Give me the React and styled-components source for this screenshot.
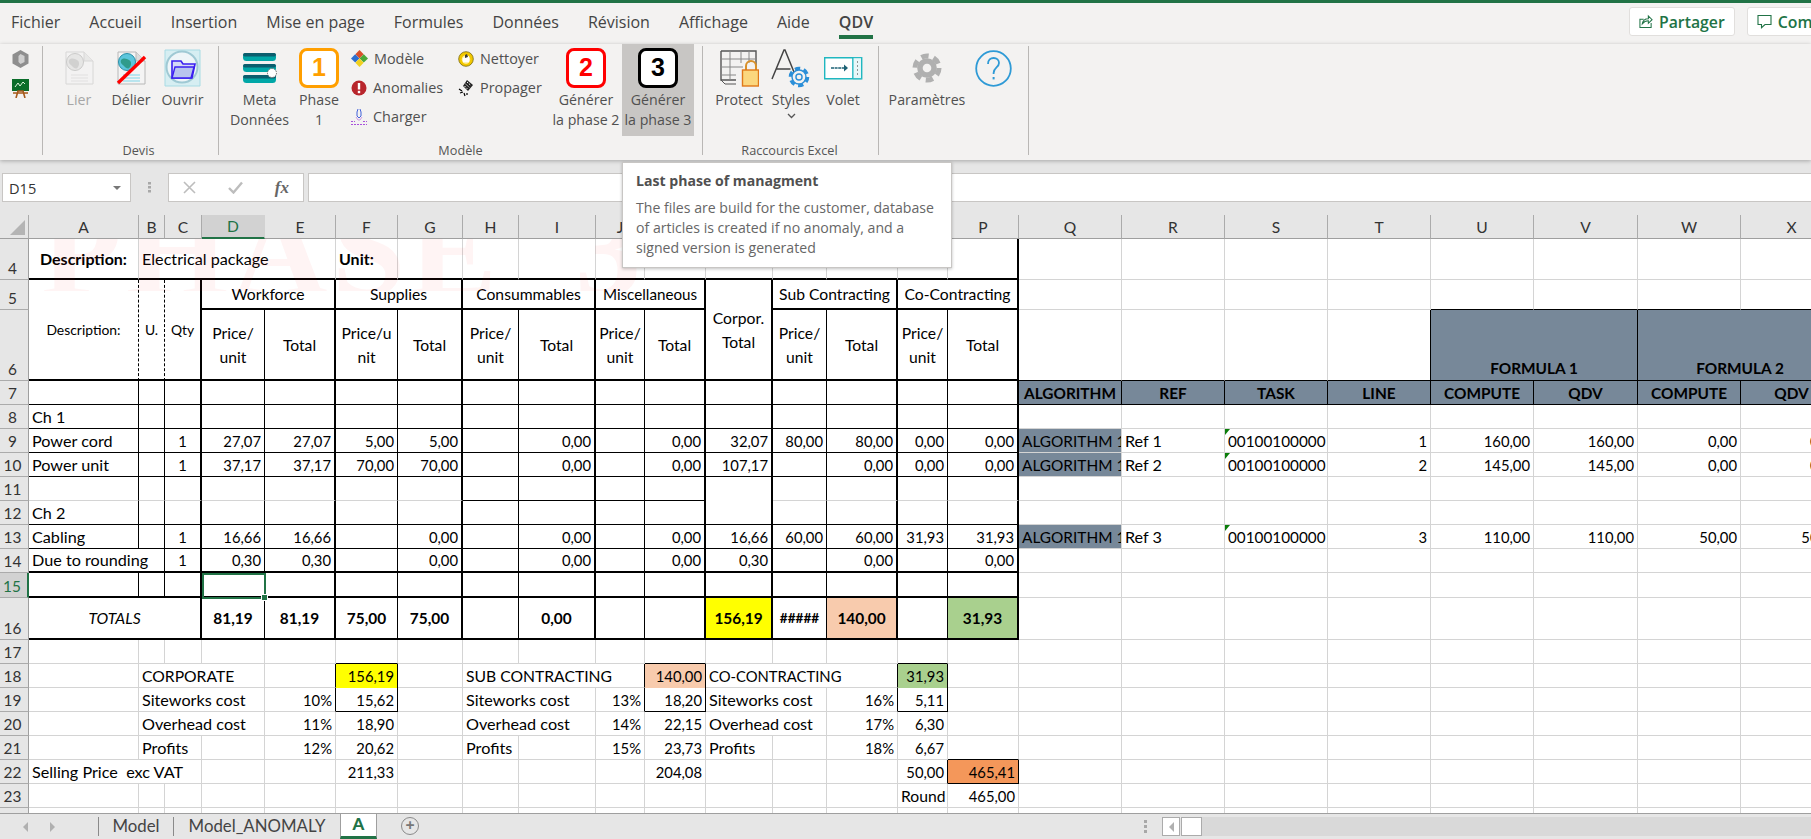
import React from 'react';
import styled, { createGlobalStyle, css } from 'styled-components';

const Global = createGlobalStyle`
  html, body { margin: 0; padding: 0; background: #fff; }
  #root { width: 1811px; height: 839px; overflow: hidden; }
`;

const UI_FONT = `"Open Sans", "Noto Sans", sans-serif`;
const CELL_FONT = `Lato, "Open Sans", sans-serif`;
const GREEN = '#217346';
const SLATE = '#778899';

const Page = styled.div`
  position: relative;
  width: 1811px;
  height: 839px;
  display: flex;
  flex-direction: column;
  overflow: hidden;
  font-family: ${UI_FONT};
  background: #e6e6e6;
`;

/* ---------- ribbon ---------- */

const TitleBar = styled.header`
  flex: none;
  height: 44px;
  box-sizing: border-box;
  border-top: 3px solid ${GREEN};
  background: #f3f2f1;
  display: flex;
  align-items: flex-start;
  justify-content: space-between;
  overflow: hidden;
`;

const Tabs = styled.nav`
  display: flex;
  gap: 29px;
  padding-left: 11px;
`;

const Tab = styled.div`
  height: 36px;
  box-sizing: border-box;
  padding-top: 7px;
  font-size: 16px;
  line-height: 24px;
  color: #444;
  ${p => p.$active && css`
    font-weight: 600;
    border-bottom: 4px solid ${GREEN};
  `}
`;

const Actions = styled.div`
  flex: none;
  width: 182px;
  display: flex;
  gap: 12px;
  padding-top: 4px;
  overflow: hidden;
`;

const ActionButton = styled.div`
  flex: none;
  height: 29px;
  box-sizing: border-box;
  display: flex;
  align-items: center;
  gap: 6px;
  padding: 0 9px;
  background: #fff;
  border: 1px solid #e1dfdd;
  border-radius: 3px;
  color: ${GREEN};
  font-size: 15.8px;
  font-weight: 600;
`;

const Ribbon = styled.section`
  position: relative;
  z-index: 2;
  flex: none;
  height: 116px;
  display: flex;
  background: #f3f2f1;
  box-shadow: 0 1px 4px rgba(0, 0, 0, 0.28);
`;

const Group = styled.div`
  position: relative;
  flex: none;
  width: ${p => p.$width}px;
  box-sizing: border-box;
  padding-left: ${p => p.$pad || 0}px;
  &::after {
    content: '';
    position: absolute;
    top: 2px;
    right: 0;
    bottom: 5px;
    width: 1px;
    background: #b9b7b5;
  }
`;

const GroupItems = styled.div`
  display: flex;
  height: 92px;
`;

const GroupLabel = styled.div`
  height: 24px;
  line-height: 15px;
  margin-top: 7px;
  font-size: 12.7px;
  color: #555;
  text-align: center;
  margin-left: ${p => p.$shift || 0}px;
`;

const BigButton = styled.div`
  flex: none;
  width: ${p => p.$width}px;
  height: 92px;
  box-sizing: border-box;
  padding-top: 4px;
  display: flex;
  flex-direction: column;
  align-items: center;
  font-size: 14.2px;
  line-height: 20px;
  text-align: center;
  white-space: pre;
  color: ${p => (p.$disabled ? '#a6a6a6' : '#505050')};
  background: ${p => (p.$hover ? '#c8c6c4' : 'transparent')};
`;

const IconBox = styled.div`
  height: 40px;
  margin-bottom: 2px;
  display: flex;
  align-items: center;
  justify-content: center;
`;

const PhaseBadge = styled.div`
  width: 40px;
  height: 40px;
  box-sizing: border-box;
  border: 3px solid ${p => p.$color};
  border-radius: 8px;
  background: #fff;
  color: ${p => p.$color};
  font-family: "Liberation Sans", sans-serif;
  font-size: 25px;
  font-weight: 700;
  line-height: 33px;
  text-align: center;
`;

const SmallColumn = styled.div`
  flex: none;
  width: ${p => p.$width}px;
  box-sizing: border-box;
  padding-left: ${p => p.$pad || 0}px;
  display: flex;
  flex-direction: column;
`;

const SmallButton = styled.div`
  height: 29px;
  display: flex;
  align-items: center;
  gap: 6px;
  font-size: 14.4px;
  color: #505050;
  white-space: nowrap;
`;

const Chevron = styled.svg`
  margin-top: 3px;
`;

const IconStack = styled.div`
  display: flex;
  flex-direction: column;
  align-items: center;
  gap: 11px;
  padding: 6px 0 0 11px;
  width: 18px;
`;

/* ---------- formula bar ---------- */

const FormulaBar = styled.div`
  flex: none;
  height: 55px;
  box-sizing: border-box;
  padding: 13px 0 13px 2px;
  display: flex;
  align-items: stretch;
  background: #e6e6e6;
`;

const NameBox = styled.div`
  width: 129px;
  box-sizing: border-box;
  display: flex;
  align-items: center;
  justify-content: space-between;
  padding: 0 9px 0 6px;
  background: #fff;
  border: 1px solid #c8c6c4;
  font-size: 14.6px;
  color: #333;
`;

const Caret = styled.span`
  width: 0;
  height: 0;
  border-left: 4px solid transparent;
  border-right: 4px solid transparent;
  border-top: 4px solid #777;
`;

const Grip = styled.svg`
  margin: 9px 17px 0 17px;
`;

const FxBox = styled.div`
  width: 136px;
  box-sizing: border-box;
  display: flex;
  align-items: center;
  justify-content: space-between;
  padding: 0 14px 0 14px;
  background: #fff;
  border: 1px solid #c8c6c4;
`;

const FxMark = styled.span`
  font-family: "Liberation Serif", serif;
  font-style: italic;
  font-weight: 700;
  font-size: 17px;
  color: #666;
`;

const FormulaInput = styled.div`
  flex: 1;
  margin-left: 4px;
  background: #fff;
  border: 1px solid #c8c6c4;
  border-right: 0;
`;

/* ---------- tooltip ---------- */

const Tooltip = styled.aside`
  position: absolute;
  z-index: 5;
  left: 622px;
  top: 162px;
  width: 330px;
  height: 106px;
  box-sizing: border-box;
  padding: 8px 13px;
  background: #fff;
  border: 1px solid #c8c6c4;
  box-shadow: 0 1px 3px rgba(0, 0, 0, 0.25);
  color: #666;
  font-size: 14.1px;
  line-height: 20px;
  white-space: nowrap;
`;

const TooltipTitle = styled.div`
  margin-bottom: 7px;
  font-weight: 700;
  color: #505050;
`;

/* ---------- sheet ---------- */

const Sheet = styled.main`
  position: relative;
  flex: 1;
  min-height: 0;
  overflow: hidden;
  background: #fff;
`;

const SheetGrid = styled.div`
  display: grid;
  width: 1843px;
  grid-template-columns: 29px 110px 26px 37px 63px 71px 62px 65px 56px 77px 49px 61px 67px 54px 71px 50px 71px 103px 103px 103px 103px 103px 104px 103px 102px;
  grid-template-rows: 24px 41px 30px 71px repeat(8, 24px) 25px 42px repeat(8, 24px);
  font-family: ${CELL_FONT};
  color: #000;
`;

const Corner = styled.div`
  position: relative;
  background: #e6e6e6;
  border-right: 1px solid #ababab;
  border-bottom: 1px solid #9f9f9f;
  &::after {
    content: '';
    position: absolute;
    right: 3px;
    bottom: 3px;
    border-style: solid;
    border-width: 0 0 15px 15px;
    border-color: transparent transparent #b4b4b4 transparent;
  }
`;

const ColHead = styled.div`
  box-sizing: border-box;
  display: flex;
  align-items: center;
  justify-content: center;
  font-size: 15.6px;
  color: ${p => (p.$active ? GREEN : '#333')};
  background: ${p => (p.$active ? '#d2d2d2' : '#e6e6e6')};
  border-right: 1px solid ${p => (p.$active ? '#d2d2d2' : '#ababab')};
  border-bottom: ${p => (p.$active ? `2px solid ${GREEN}` : '1px solid #9f9f9f')};
`;

const RowHead = styled.div`
  box-sizing: border-box;
  display: flex;
  align-items: flex-end;
  justify-content: center;
  padding: 0 3px 1px 0;
  font-size: 15.4px;
  line-height: 20px;
  color: ${p => (p.$active ? GREEN : '#333')};
  background: ${p => (p.$active ? '#d2d2d2' : '#e6e6e6')};
  border-right: ${p => (p.$active ? `2px solid ${GREEN}` : '1px solid #9f9f9f')};
  border-bottom: 1px solid #ababab;
`;

const LINES = {
  grid: '1px solid #d4d4d4',
  thin: '1px solid #000',
  thick: '2px solid #000',
  dash: '1px dashed #000',
  none: '0',
};

const Cell = styled.div`
  position: relative;
  box-sizing: border-box;
  min-width: 0;
  grid-column: span ${p => p.$span};
  grid-row: span ${p => p.$rows};
  display: flex;
  align-items: ${p => (p.$low ? 'flex-end' : 'center')};
  justify-content: ${p => ({ l: 'flex-start', c: 'center', r: 'flex-end' }[p.$align])};
  padding: 0 3px;
  overflow: hidden;
  white-space: pre;
  line-height: 24px;
  text-align: center;
  font-size: ${p => p.$size}px;
  font-weight: ${p => (p.$bold ? 700 : 400)};
  font-style: ${p => (p.$italic ? 'italic' : 'normal')};
  background: ${p => p.$fill || 'transparent'};
  border-right: ${p => LINES[p.$right]};
  border-bottom: ${p => LINES[p.$bottom]};
  ${p => p.$note && css`
    &::before {
      content: '';
      position: absolute;
      left: 0;
      top: 0;
      border-style: solid;
      border-width: 6px 5px 0 0;
      border-color: #0a7d0a transparent transparent transparent;
    }
  `}
`;

const SelectionBox = styled.div`
  position: absolute;
  left: 202px;
  top: 358px;
  width: 64px;
  height: 26px;
  box-sizing: border-box;
  border: 2px solid ${GREEN};
  &::after {
    content: '';
    position: absolute;
    right: -4px;
    bottom: -4px;
    width: 7px;
    height: 7px;
    background: ${GREEN};
    border: 1px solid #fff;
    box-sizing: border-box;
  }
`;

const Watermark = styled.div`
  position: absolute;
  left: 29px;
  top: 24px;
  width: 700px;
  height: 52px;
  overflow: hidden;
  pointer-events: none;
  font-family: "Liberation Serif", serif;
  font-weight: 700;
  font-size: 132px;
  line-height: 52px;
  white-space: pre;
  color: rgba(255, 40, 40, 0.05);
`;

const WatermarkText = styled.div`
  margin: -14px 0 0 12px;
  letter-spacing: 4px;
`;

/* ---------- bottom bar ---------- */

const SheetTabs = styled.footer`
  position: relative;
  flex: none;
  height: 26px;
  box-sizing: border-box;
  display: flex;
  align-items: stretch;
  background: #e6e6e6;
  border-top: 1px solid #9f9f9f;
`;

const TabNav = styled.div`
  width: 98px;
  flex: none;
  display: flex;
  align-items: center;
  gap: 22px;
  padding-left: 23px;
  box-sizing: border-box;
`;

const NavArrow = styled.span`
  width: 0;
  height: 0;
  border-top: 5px solid transparent;
  border-bottom: 5px solid transparent;
  ${p => (p.$right
    ? 'border-left: 5px solid #b0b0b0;'
    : 'border-right: 5px solid #b0b0b0;')}
`;

const SheetTab = styled.div`
  flex: none;
  width: ${p => p.$width}px;
  box-sizing: border-box;
  display: flex;
  align-items: center;
  justify-content: center;
  padding-bottom: 3px;
  font-family: ${CELL_FONT};
  font-size: 16.8px;
  color: #444;
  border-left: ${p => (p.$active ? 'none' : '1px solid #8a8a8a')};
  margin: ${p => (p.$active ? '0' : '3px 0')};
  ${p => p.$active && css`
    background: #fff;
    color: ${GREEN};
    font-weight: 900;
    border-bottom: 3px solid ${GREEN};
    border-right: 1px solid #9f9f9f;
    border-left: 1px solid #9f9f9f;
  `}
`;

const AddSheet = styled.div`
  margin: 3px 0 0 24px;
  width: 18px;
  height: 18px;
  box-sizing: border-box;
  border: 1.5px solid #8a8a8a;
  border-radius: 50%;
  color: #777;
  font-size: 16px;
  font-weight: 700;
  line-height: 14px;
  text-align: center;
`;

const ScrollArea = styled.div`
  margin-left: auto;
  width: 667px;
  flex: none;
  display: flex;
  align-items: center;
`;

const ScrollDots = styled.svg`
  margin-right: 15px;
`;

const ScrollLeft = styled.div`
  width: 18px;
  height: 19px;
  box-sizing: border-box;
  background: #fff;
  border: 1px solid #ababab;
  display: flex;
  align-items: center;
  justify-content: center;
`;

const ScrollThumb = styled.div`
  width: 21px;
  height: 19px;
  box-sizing: border-box;
  margin-left: 1px;
  background: #fff;
  border: 1px solid #ababab;
`;

const ScrollTrack = styled.div`
  flex: 1;
  height: 19px;
  background: #d9d9d9;
`;

/* ---------- icons ---------- */

const DocIcon = ({ faded, slash }) => (
  <svg width="32" height="34" viewBox="0 0 32 34">
    <g opacity={faded ? 0.45 : 1}>
      <path d="M3 1h18l9 9v23H3z" fill="#f4f4f4" stroke="#b8b8b8" />
      <path d="M21 1v9h9" fill="#dcdcdc" stroke="#b8b8b8" />
      <path d="M8 24h17M8 27h17M8 30h17" stroke={faded ? '#ccc' : '#7fd5e8'} />
      <circle cx="12" cy="11" r="8.5" fill={faded ? '#d8d8d8' : '#5cc6dc'} stroke={faded ? '#9a9a9a' : '#2b8fa8'} />
      <path d="M6 9c3-3 6-1 8 0s3 4 1 7-4 1-6-1-4-3-3-6z" fill={faded ? '#aaa' : '#2f9b8b'} />
    </g>
    {slash && <path d="M3 32 30 6" stroke="#f00" strokeWidth="3.4" />}
  </svg>
);

const FolderIcon = () => (
  <svg width="37" height="38" viewBox="0 0 37 38">
    <path d="M1 1h35v36H1z" fill="#d6eef2" stroke="#a8dbe4" />
    <circle cx="18" cy="18" r="15.5" fill="#eef5f8" stroke="#9fc9d4" strokeWidth="2" />
    <path d="M8 12h9l2 3h12l-3 14H8z" fill="#d4d8f5" stroke="#3a1ff0" strokeWidth="1.6" />
    <path d="M11 18h19l-3 11H8z" fill="#b9c4ee" stroke="#3a1ff0" strokeWidth="1.4" />
  </svg>
);

const MetaIcon = () => (
  <svg width="34" height="30" viewBox="0 0 34 30">
    {[0, 11, 22].map(y => (
      <g key={y}>
        <rect x="0" y={y} width="33" height="8" rx="3.5" fill="#00a7a7" />
        <rect x="0" y={y} width="33" height="3.5" rx="1.7" fill="#0b5e6e" />
      </g>
    ))}
    <circle cx="29" cy="20" r="4.5" fill="#fff" stroke="#666" strokeDasharray="1.5 1" />
  </svg>
);

const CubeIcon = () => (
  <svg width="17" height="18" viewBox="0 0 17 18">
    <path d="M8.5 0 16.5 4.5v9L8.5 18 .5 13.5v-9z" fill="#8e8e8e" />
    <path d="M8.5 4 12.5 6v6l-4 2-2-2V6z" fill="#cfcfcf" />
  </svg>
);

const BoardIcon = () => (
  <svg width="17" height="19" viewBox="0 0 17 19">
    <rect x="0" y="0" width="17" height="12" fill="#0a6d2a" />
    <path d="M3 8 6 4l2 3 3-4 2 2" stroke="#dff5df" fill="none" />
    <path d="M4 19 6 12h5l2 7M1 14h15" stroke="#a65a1a" strokeWidth="1.6" fill="none" />
  </svg>
);

const DiamondsIcon = () => (
  <svg width="17" height="17" viewBox="0 0 17 17">
    <path d="M8.5 0l4.2 4.2-4.2 4.2-4.2-4.2z" fill="#d8502c" />
    <path d="M4.2 4.2l4.2 4.2-4.2 4.2L0 8.4z" fill="#2e6fd0" />
    <path d="M12.8 4.2 17 8.4l-4.2 4.2-4.2-4.2z" fill="#4aa838" />
    <path d="M8.5 8.5l4.2 4.2-4.2 4.2-4.2-4.2z" fill="#f0d020" />
  </svg>
);

const AlertIcon = () => (
  <svg width="16" height="16" viewBox="0 0 16 16">
    <circle cx="8" cy="8" r="7.5" fill="#b8262c" />
    <rect x="6.8" y="3" width="2.4" height="6.5" fill="#fff" />
    <rect x="6.8" y="10.8" width="2.4" height="2.4" fill="#fff" />
  </svg>
);

const LoadIcon = () => (
  <svg width="16" height="17" viewBox="0 0 16 17" fill="none">
    <path d="M7 1 6 4M9 1l1 3M6 4v4l2 2 2-2V4" stroke="#2c50d8" strokeWidth="0.9" />
    <path d="M5 9 7 12h2l2-3" stroke="#c890e0" strokeWidth="0.9" />
    <path d="M0 13.5h4M12 13.5h4M0 16.5h16" stroke="#a040d8" strokeWidth="0.9" strokeDasharray="2 1" />
  </svg>
);

const CleanIcon = () => (
  <svg width="16" height="16" viewBox="0 0 16 16">
    <circle cx="8" cy="8" r="7.3" fill="#f2c800" stroke="#7a6a10" strokeWidth="0.8" />
    <circle cx="8" cy="8.5" r="4.2" fill="#fff3b0" />
    <path d="M5 11V7l6-2v6z" fill="#fff" />
    <path d="M7 4l2-1 1 3-3 1z" fill="#3a3a3a" />
  </svg>
);

const PropagateIcon = () => (
  <svg width="16" height="18" viewBox="0 0 16 18">
    <path d="M9 1l6 5-5 6-5-5z" fill="#222" />
    <path d="M9 3l4 3.5M7.5 5l4 3.5M6.5 7l3 3" stroke="#fff" strokeDasharray="1.5 1" />
    <path d="M1 10l3 2M5 13l-3 1M6 14l1 3M9 14v2" stroke="#000" strokeWidth="1.2" />
  </svg>
);

const ProtectIcon = () => (
  <svg width="39" height="37" viewBox="0 0 39 37">
    <path d="M1 1h35v24M1 1v29h15" fill="none" stroke="#555" strokeWidth="1.4" />
    <path d="M1 9h35M1 17h22M1 25h15M10 1v29M21 1v12M29 1v12" fill="none" stroke="#888" />
    <path d="M1 30l4 4h11" fill="none" stroke="#555" />
    <path d="M26 20v-4a5 5 0 0 1 10 0v4" fill="none" stroke="#d8902a" strokeWidth="2" />
    <rect x="22.5" y="20" width="16" height="16" fill="#fbd77e" stroke="#e07818" strokeWidth="1.4" />
  </svg>
);

const GearShape = ({ cx, cy, r, color, hole, stroke }) => (
  <g>
    <circle cx={cx} cy={cy} r={r} fill="none" stroke={color} strokeWidth={r * 0.42} strokeDasharray={`${r * 0.62} ${r * 0.43}`} />
    <circle cx={cx} cy={cy} r={r * 0.82} fill={stroke ? '#f3f2f1' : color} stroke={color} strokeWidth={stroke ? 1.4 : 0} />
    <circle cx={cx} cy={cy} r={r * 0.36} fill={hole} stroke={stroke ? color : 'none'} strokeWidth="1.4" />
  </g>
);

const StylesIcon = () => (
  <svg width="40" height="39" viewBox="0 0 40 39">
    <path d="M1 30 13 1h1l11 27M5.5 20h14" fill="none" stroke="#444" strokeWidth="1.5" />
    <GearShape cx={28} cy={28} r={8.5} color="#2b8fd8" hole="#f3f2f1" stroke />
  </svg>
);

const VoletIcon = () => (
  <svg width="39" height="24" viewBox="0 0 39 24">
    <path d="M.7 1.7h37v21H.7zM29 1.7v21" fill="#fff" stroke="#1fb7c0" strokeWidth="1.4" />
    <path d="M29 1.7h8.5v21H29z" fill="#e7f7f8" stroke="#1fb7c0" />
    <path d="M33 6h1M33 10h1M33 14h1M33 18h1" stroke="#333" />
    <path d="M7 12h14" stroke="#1d6275" strokeWidth="1.6" strokeDasharray="3 .6" />
    <path d="M20 8.5l4 3.5-4 3.5z" fill="#1d6275" />
  </svg>
);

const SettingsIcon = () => (
  <svg width="32" height="32" viewBox="0 0 32 32">
    <GearShape cx={16} cy={16} r={12} color="#b0b0b0" hole="#f3f2f1" />
  </svg>
);

const HelpIcon = () => (
  <svg width="37" height="37" viewBox="0 0 37 37" fill="none" stroke="#2e9ad6">
    <circle cx="18.5" cy="18.5" r="17.3" strokeWidth="1.8" />
    <path d="M13 14c0-4 2.6-6 5.6-6 3.2 0 5.4 2.2 5.4 5 0 4.6-5.4 4.4-5.4 10v1" strokeWidth="1.8" />
    <path d="M18.6 27v2.4" strokeWidth="2" />
  </svg>
);

const ShareIcon = () => (
  <svg width="14" height="15" viewBox="0 0 15 15" fill="none" stroke={GREEN} strokeWidth="1.1">
    <path d="M5 5H1v9h12V9" />
    <path d="M3.5 10C4 6 6.5 4.5 10 4.5V1.5l4 4-4 4V6.8c-2.5 0-4.6.8-6.5 3.2z" />
  </svg>
);

const CommentIcon = () => (
  <svg width="15" height="15" viewBox="0 0 15 15" fill="none" stroke={GREEN} strokeWidth="1.1">
    <path d="M1 1.5h13v9H8l-3.5 3.2v-3.2H1z" />
  </svg>
);

const CancelIcon = () => (
  <svg width="13" height="13" viewBox="0 0 13 13" stroke="#bdbdbd" strokeWidth="1.6">
    <path d="M1 1l11 11M12 1L1 12" />
  </svg>
);

const ConfirmIcon = () => (
  <svg width="15" height="13" viewBox="0 0 15 13" fill="none" stroke="#bdbdbd" strokeWidth="2.4">
    <path d="M1 7l4.5 4.5L14 1.5" />
  </svg>
);

/* ---------- sheet data ---------- */

const COLS = 'ABCDEFGHIJKLMNOPQRSTUVWX'.split('');
const ROWS = Array.from({ length: 21 }, (_, i) => i + 4);
const TABLE_THICK = 'CEGIKLNP';
const inTable = c => COLS.indexOf(c) <= COLS.indexOf('P');

const num = (col, ...vals) => {
  // writes values to successive columns, null leaves a gap
  const start = COLS.indexOf(col);
  const out = {};
  vals.forEach((v, i) => { if (v !== null) out[COLS[start + i]] = v; });
  return out;
};

const head = t => ({ t, bold: true, fill: SLATE, align: 'c' });
const price = t => ({ t, align: 'c' });
const tot = t => ({ t, bold: true, align: 'c' });
const algo = { t: 'ALGORITHM 1', fill: SLATE, align: 'l', size: 15.4 };
const task = { t: '00100100000', note: true, align: 'l', size: 15.3 };

const CELLS = {
  4: {
    A: { t: 'Description:', bold: true, align: 'c', size: 16 },
    B: { t: 'Electrical package', span: 4 },
    F: { t: 'Unit:', bold: true, size: 16 },
  },
  5: {
    A: { t: 'Description:', rows: 2, align: 'c', size: 13.9 },
    B: { t: 'U.', rows: 2, align: 'c', size: 13.9 },
    C: { t: 'Qty', rows: 2, align: 'c', size: 13.9 },
    D: { t: 'Workforce', span: 2, align: 'c' },
    F: { t: 'Supplies', span: 2, align: 'c' },
    H: { t: 'Consummables', span: 2, align: 'c' },
    J: { t: 'Miscellaneous', span: 2, align: 'c', size: 15.2 },
    L: { t: 'Corpor.\nTotal', rows: 2, align: 'c' },
    M: { t: 'Sub Contracting', span: 2, align: 'c' },
    O: { t: 'Co-Contracting', span: 2, align: 'c' },
  },
  6: {
    D: price('Price/\nunit'), E: price('Total'),
    F: price('Price/u\nnit'), G: price('Total'),
    H: price('Price/\nunit'), I: price('Total'),
    J: price('Price/\nunit'), K: price('Total'),
    M: price('Price/\nunit'), N: price('Total'),
    O: price('Price/\nunit'), P: price('Total'),
    U: { t: 'FORMULA 1', span: 2, bold: true, fill: SLATE, align: 'c', low: true },
    W: { t: 'FORMULA 2', span: 2, bold: true, fill: SLATE, align: 'c', low: true },
  },
  7: {
    Q: head('ALGORITHM'), R: head('REF'), S: head('TASK'), T: head('LINE'),
    U: head('COMPUTE'), V: head('QDV'), W: head('COMPUTE'), X: head('QDV'),
  },
  8: { A: 'Ch 1' },
  9: {
    A: 'Power cord', C: price('1'),
    ...num('D', '27,07', '27,07', '5,00', '5,00', null, '0,00', null, '0,00', '32,07', '80,00', '80,00', '0,00', '0,00'),
    Q: algo, R: 'Ref 1', S: task,
    ...num('T', '1', '160,00', '160,00', '0,00', '0,00'),
  },
  10: {
    A: 'Power unit', C: price('1'),
    ...num('D', '37,17', '37,17', '70,00', '70,00', null, '0,00', null, '0,00', '107,17', null, '0,00', '0,00', '0,00'),
    Q: algo, R: 'Ref 2', S: task,
    ...num('T', '2', '145,00', '145,00', '0,00', '0,00'),
  },
  11: { L: { t: '', rows: 2 } },
  12: { A: 'Ch 2' },
  13: {
    A: 'Cabling', C: price('1'),
    ...num('D', '16,66', '16,66', null, '0,00', null, '0,00', null, '0,00', '16,66', '60,00', '60,00', '31,93', '31,93'),
    Q: algo, R: 'Ref 3', S: task,
    ...num('T', '3', '110,00', '110,00', '50,00', '50,00'),
  },
  14: {
    A: { t: 'Due to rounding', span: 2 }, C: price('1'),
    ...num('D', '0,30', '0,30', null, '0,00', null, '0,00', null, '0,00', '0,30', null, '0,00', null, '0,00'),
  },
  16: {
    A: { t: 'TOTALS', span: 3, italic: true, align: 'c' },
    D: tot('81,19'), E: tot('81,19'), F: tot('75,00'), G: tot('75,00'), I: tot('0,00'),
    L: { ...tot('156,19'), fill: '#ffff00' },
    M: { ...tot('#####'), size: 13.6 },
    N: { ...tot('140,00'), fill: '#f8cbad' },
    P: { ...tot('31,93'), fill: '#a9d08e' },
  },
  18: {
    B: { t: 'CORPORATE', span: 3 }, F: { t: '156,19', fill: '#ffff00' },
    H: { t: 'SUB CONTRACTING', span: 3 }, K: { t: '140,00', fill: '#f8cbad' },
    L: { t: 'CO-CONTRACTING', span: 3, size: 14.8 }, O: { t: '31,93', fill: '#a9d08e' },
  },
  19: {
    B: { t: 'Siteworks cost', span: 3 }, E: '10%', F: '15,62',
    H: { t: 'Siteworks cost', span: 2 }, J: '13%', K: '18,20',
    L: { t: 'Siteworks cost', span: 2 }, N: '16%', O: '5,11',
  },
  20: {
    B: { t: 'Overhead cost', span: 3 }, E: '11%', F: '18,90',
    H: { t: 'Overhead cost', span: 2 }, J: '14%', K: '22,15',
    L: { t: 'Overhead cost', span: 2 }, N: '17%', O: '6,30',
  },
  21: {
    B: { t: 'Profits', span: 2 }, E: '12%', F: '20,62',
    H: 'Profits', J: '15%', K: '23,73',
    L: 'Profits', N: '18%', O: '6,67',
  },
  22: {
    A: { t: 'Selling Price  exc VAT', span: 3 }, F: '211,33', K: '204,08', O: '50,00',
    P: { t: '465,41', fill: '#f4975a' },
  },
  23: { O: { t: 'Round', align: 'l' }, P: '465,00' },
};

// borders around the summary boxes and other one-off lines
const OVERRIDES = {
  F17: { b: 'thin' }, K17: { b: 'thin' }, O17: { b: 'thin' }, P21: { b: 'thin' },
  E18: { r: 'thin' }, F18: { r: 'thin', b: 'none' }, E19: { r: 'thin' }, F19: { r: 'thin', b: 'thin' },
  J18: { r: 'thin' }, K18: { r: 'thin', b: 'none' }, J19: { r: 'thin' }, K19: { r: 'thin', b: 'thin' },
  N18: { r: 'thin' }, O18: { r: 'thin', b: 'none' }, N19: { r: 'thin' }, O19: { r: 'thin', b: 'thin' },
  O22: { r: 'thin' }, P22: { r: 'thin', b: 'thin' },
  T6: { r: 'thin' },
  U5: { b: 'thin' }, V5: { b: 'thin' }, W5: { b: 'thin' }, X5: { b: 'thin' },
};

const rightLine = (col, row) => {
  const over = OVERRIDES[col + row];
  if (over && over.r) return over.r;
  if (row === 4) return col === 'P' ? 'thick' : 'grid';
  if (row >= 5 && row <= 16 && inTable(col)) {
    if (row <= 6 && (col === 'A' || col === 'B')) return 'dash';
    return TABLE_THICK.includes(col) ? 'thick' : 'thin';
  }
  if (row === 7 && !inTable(col)) return 'thin';
  if (row === 6 && (col === 'V' || col === 'X')) return 'thin';
  return 'grid';
};

const bottomLine = (col, row) => {
  const over = OVERRIDES[col + row];
  if (over && over.b) return over.b;
  if (inTable(col)) {
    if (row === 4 || row === 5 || row === 6 || (row >= 14 && row <= 16)) return 'thick';
    if (row === 11) return 'HIJK'.includes(col) ? 'thin' : 'grid';
    if (row >= 7 && row <= 13) return 'thin';
    return 'grid';
  }
  if (row === 6 || row === 7) return 'thin';
  return 'grid';
};

const defaultSize = (cell, isNumber) => {
  if (cell.size) return cell.size;
  if (cell.bold) return 15.4;
  if (isNumber) return 14.8;
  // free text in the body reads a little wider than the centred headers
  return /[a-z]/.test(cell.t || '') && !cell.align ? 16.2 : 15.7;
};

const renderCells = () => {
  const taken = new Set();
  const out = [<Corner key="corner" />];
  COLS.forEach(c => out.push(<ColHead key={c} $active={c === 'D'}>{c}</ColHead>));
  ROWS.forEach(row => {
    out.push(<RowHead key={`h${row}`} $active={row === 15}>{row}</RowHead>);
    COLS.forEach((col, i) => {
      const id = col + row;
      if (taken.has(id)) return;
      const raw = (CELLS[row] || {})[col];
      const cell = typeof raw === 'string' ? { t: raw } : raw || {};
      const span = cell.span || 1;
      const rows = cell.rows || 1;
      for (let y = 0; y < rows; y++) {
        for (let x = 0; x < span; x++) taken.add(COLS[i + x] + (row + y));
      }
      const isNumber = /^[\d,%]+$/.test(cell.t || '');
      const lastCol = COLS[i + span - 1];
      const lastRow = row + rows - 1;
      out.push(
        <Cell
          key={id}
          $span={span}
          $rows={rows}
          $align={cell.align || (isNumber ? 'r' : 'l')}
          $bold={cell.bold}
          $italic={cell.italic}
          $low={cell.low}
          $size={defaultSize(cell, isNumber)}
          $fill={cell.fill}
          $note={cell.note}
          $right={rightLine(lastCol, row)}
          $bottom={bottomLine(lastCol, lastRow)}
        >
          {cell.t}
        </Cell>
      );
    });
  });
  return out;
};

/* ---------- page ---------- */

const TABS = ['Fichier', 'Accueil', 'Insertion', 'Mise en page', 'Formules', 'Données', 'Révision', 'Affichage', 'Aide'];

export default function App() {
  return (
    <Page>
      <Global />
      <TitleBar>
        <Tabs>
          {TABS.map(t => <Tab key={t}>{t}</Tab>)}
          <Tab $active>QDV</Tab>
        </Tabs>
        <Actions>
          <ActionButton><ShareIcon />Partager</ActionButton>
          <ActionButton><CommentIcon />Commentaires</ActionButton>
        </Actions>
      </TitleBar>

      <Ribbon>
        <Group $width={43}>
          <IconStack>
            <CubeIcon />
            <BoardIcon />
          </IconStack>
        </Group>

        <Group $width={176} $pad={10}>
          <GroupItems>
            <BigButton $width={52} $disabled><IconBox><DocIcon faded /></IconBox>Lier</BigButton>
            <BigButton $width={52}><IconBox><DocIcon slash /></IconBox>Délier</BigButton>
            <BigButton $width={51}><IconBox><FolderIcon /></IconBox>Ouvrir</BigButton>
          </GroupItems>
          <GroupLabel $shift={5}>Devis</GroupLabel>
        </Group>

        <Group $width={484} $pad={4}>
          <GroupItems>
            <BigButton $width={73}><IconBox><MetaIcon /></IconBox>{'Meta\nDonnées'}</BigButton>
            <BigButton $width={46}><IconBox><PhaseBadge $color="#ff9f00">1</PhaseBadge></IconBox>{'Phase\n1'}</BigButton>
            <SmallColumn $width={106} $pad={9}>
              <SmallButton><DiamondsIcon />Modèle</SmallButton>
              <SmallButton><AlertIcon />Anomalies</SmallButton>
              <SmallButton><LoadIcon />Charger</SmallButton>
            </SmallColumn>
            <SmallColumn $width={102} $pad={10}>
              <SmallButton><CleanIcon />Nettoyer</SmallButton>
              <SmallButton><PropagateIcon />Propager</SmallButton>
            </SmallColumn>
            <BigButton $width={72}><IconBox><PhaseBadge $color="#ff0000">2</PhaseBadge></IconBox>{'Générer\nla phase 2'}</BigButton>
            <BigButton $width={72} $hover><IconBox><PhaseBadge $color="#000">3</PhaseBadge></IconBox>{'Générer\nla phase 3'}</BigButton>
          </GroupItems>
          <GroupLabel $shift={-5}>Modèle</GroupLabel>
        </Group>

        <Group $width={176} $pad={6}>
          <GroupItems>
            <BigButton $width={60}><IconBox><ProtectIcon /></IconBox>Protect</BigButton>
            <BigButton $width={44}>
              <IconBox><StylesIcon /></IconBox>
              Styles
              <Chevron width="9" height="6" viewBox="0 0 9 6" fill="none" stroke="#555" strokeWidth="1.3">
                <path d="M1 1l3.5 3.5L8 1" />
              </Chevron>
            </BigButton>
            <BigButton $width={60}><IconBox><VoletIcon /></IconBox>Volet</BigButton>
          </GroupItems>
          <GroupLabel $shift={-9}>Raccourcis Excel</GroupLabel>
        </Group>

        <Group $width={150} $pad={6}>
          <GroupItems>
            <BigButton $width={84}><IconBox><SettingsIcon /></IconBox>Paramètres</BigButton>
            <BigButton $width={48}><IconBox><HelpIcon /></IconBox></BigButton>
          </GroupItems>
        </Group>
      </Ribbon>

      <FormulaBar>
        <NameBox>D15<Caret /></NameBox>
        <Grip width="3" height="11" viewBox="0 0 3 11" fill="#a8a8a8">
          <rect width="3" height="2.5" />
          <rect y="4" width="3" height="2.5" />
          <rect y="8" width="3" height="2.5" />
        </Grip>
        <FxBox><CancelIcon /><ConfirmIcon /><FxMark>fx</FxMark></FxBox>
        <FormulaInput />
      </FormulaBar>

      <Tooltip>
        <TooltipTitle>Last phase of managment</TooltipTitle>
        The files are build for the customer, database<br />
        of articles is created if no anomaly, and a<br />
        signed version is generated
      </Tooltip>

      <Sheet>
        <SheetGrid>{renderCells()}</SheetGrid>
        <Watermark><WatermarkText>PHASE  3</WatermarkText></Watermark>
        <SelectionBox />
      </Sheet>

      <SheetTabs>
        <TabNav><NavArrow /><NavArrow $right /></TabNav>
        <SheetTab $width={75}>Model</SheetTab>
        <SheetTab $width={167}>Model_ANOMALY</SheetTab>
        <SheetTab $width={37} $active>A</SheetTab>
        <AddSheet>+</AddSheet>
        <ScrollArea>
          <ScrollDots width="3" height="13" viewBox="0 0 3 13" fill="#a8a8a8">
            <rect width="3" height="3" />
            <rect y="5" width="3" height="3" />
            <rect y="10" width="3" height="3" />
          </ScrollDots>
          <ScrollLeft><NavArrow /></ScrollLeft>
          <ScrollThumb />
          <ScrollTrack />
        </ScrollArea>
      </SheetTabs>
    </Page>
  );
}
